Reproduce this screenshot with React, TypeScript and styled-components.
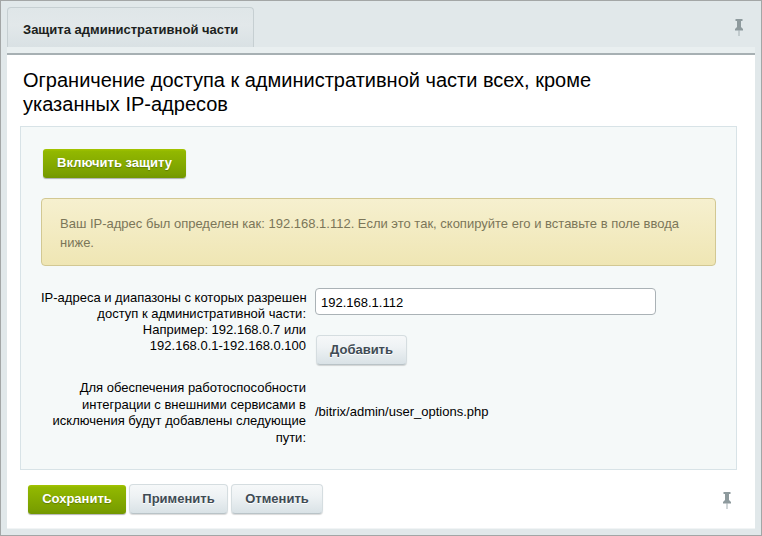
import { createGlobalStyle, styled } from 'styled-components'

const GlobalStyle = createGlobalStyle`
  html, body {
    margin: 0;
    padding: 0;
    background: #e1e8ea;
  }
  body {
    font-family: "Liberation Sans", Arial, sans-serif;
    color: #000;
  }
`

const Frame = styled.div`
  box-sizing: border-box;
  width: 762px;
  height: 536px;
  border: 1px solid #a3a6a6;
  background: #e1e8ea;
  padding: 6px;
  display: flex;
  flex-direction: column;
`

const TabBar = styled.div`
  height: 40px;
  display: flex;
  justify-content: space-between;
  align-items: flex-start;
  flex: none;
`

const Tab = styled.div`
  box-sizing: border-box;
  width: 247px;
  height: 40px;
  padding-top: 14px;
  padding-left: 15px;
  font-size: 13px;
  font-weight: bold;
  line-height: 16px;
  color: #1c1f20;
  border: 1px solid #c6cfd2;
  border-bottom: none;
  border-radius: 4px 4px 0 0;
  background: linear-gradient(#dfe6e8, #e2e8ea 45%, #d9e1e4);
`

const PinSlot = styled.div`
  padding-top: 12px;
  padding-right: 11px;
  line-height: 0;
`

const Panel = styled.div`
  flex: 1;
  background: #fff;
  box-shadow: 0 -6px 0 #e9eff0;
  display: flex;
  flex-direction: column;
  margin-top: 6px;
  border-top: 2px solid #a7b0b3;
  padding: 0 18px 0 13px;
  border-bottom: 1px solid #f1f4f5;
`

const Title = styled.h1`
  margin: 13px 0 0 3px;
  width: 640px;
  height: 58px;
  font-size: 20px;
  font-weight: normal;
  line-height: 24px;
  color: #000;
`

const Content = styled.div`
  box-sizing: border-box;
  height: 344px;
  background: #f5f9f9;
  border: 1px solid #d8e3e7;
  padding: 22px 20px 0 20px;
`

const GreenButton = styled.button<{ $width: number; $shift?: number }>`
  display: block;
  box-sizing: border-box;
  width: ${props => props.$width}px;
  height: 29px;
  margin-left: ${props => props.$shift ?? 0}px;
  padding: 0 0 2px;
  border: none;
  border-radius: 3px;
  background: linear-gradient(#a5c400 0, #92b800 8%, #7a9f00 85%, #729700);
  box-shadow: 0 1px 1px rgba(0, 0, 0, 0.3);
  color: #fff;
  font-family: inherit;
  font-size: 13px;
  font-weight: bold;
  text-shadow: 0 1px 1px rgba(0, 0, 0, 0.25);
`

const GreyButton = styled.button<{ $width: number }>`
  display: block;
  box-sizing: border-box;
  width: ${props => props.$width}px;
  height: 30px;
  padding: 0 0 1px;
  border: 1px solid #d5dde0;
  border-bottom-color: #b9c3c7;
  border-radius: 4px;
  background: linear-gradient(#f6f8f9, #eef2f4 40%, #d9e2e6);
  box-shadow: 0 1px 1px rgba(0, 0, 0, 0.15);
  color: #3f4b54;
  font-family: inherit;
  font-size: 13px;
  font-weight: bold;
  text-shadow: 0 1px 0 #fff;
`

const Notice = styled.div`
  box-sizing: border-box;
  width: 675px;
  height: 68px;
  margin-top: 20px;
  padding: 15px 18px 0 18px;
  border: 1px solid #d2c893;
  border-radius: 4px;
  background: linear-gradient(#f6f0cf, #efe6b4);
  color: #7b7659;
  font-size: 13px;
  line-height: 19px;
`

const FormGrid = styled.div`
  display: grid;
  grid-template-columns: 265px 1fr;
  column-gap: 9px;
  margin-top: 22px;
`

const Label = styled.div`
  font-size: 13px;
  line-height: 16px;
  text-align: right;
  white-space: nowrap;
  direction: ltr;
  color: #000;
  padding-top: 2px;
`

const Field = styled.div`
  display: flex;
  flex-direction: column;
  align-items: flex-start;
  gap: 20px;
`

const IpInput = styled.input`
  box-sizing: border-box;
  width: 341px;
  height: 27px;
  padding: 1px 5px 0;
  border: 1px solid #aab2b6;
  border-radius: 4px;
  background: #fff;
  font-family: inherit;
  font-size: 13px;
  color: #000;
  outline: none;
`

const AddWrap = styled.div`
  margin-left: 1px;
`

const PathsLabel = styled(Label)`
  margin-top: 13px;
  line-height: 16.5px;
`

const PathValue = styled.div`
  align-self: center;
  margin-top: 12px;
  font-size: 13px;
`

const Footer = styled.div`
  display: flex;
  align-items: center;
  gap: 3px;
  padding: 14px 5px 0 8px;
`

const FooterPin = styled.div`
  margin-left: auto;
  padding-top: 2px;
  line-height: 0;
`

function Pin() {
  return (
    <svg width="10" height="17" viewBox="0 0 10 17" fill="#8e9a9d">
      <rect x="1.5" y="0" width="7" height="2" />
      <path d="M3 2h4v6l2 2v1.5H1V10l2-2z" />
      <rect x="4.5" y="11" width="1" height="6" fill="#a4aeb1" />
    </svg>
  )
}

export default function App() {
  return (
    <Frame>
      <GlobalStyle />
      <TabBar>
        <Tab>Защита административной части</Tab>
        <PinSlot>
          <Pin />
        </PinSlot>
      </TabBar>
      <Panel>
        <Title>Ограничение доступа к административной части всех, кроме указанных IP-адресов</Title>
        <Content>
          <GreenButton $width={143} $shift={2}>Включить защиту</GreenButton>
          <Notice>
            Ваш IP-адрес был определен как: 192.168.1.112. Если это так, скопируйте его и вставьте в поле ввода ниже.
          </Notice>
          <FormGrid>
            <Label>
              IP-адреса и диапазоны с которых разрешен
              <br />
              доступ к административной части:
              <br />
              Например: 192.168.0.7 или
              <br />
              192.168.0.1-192.168.0.100
            </Label>
            <Field>
              <IpInput defaultValue="192.168.1.112" />
              <AddWrap>
                <GreyButton $width={91}>Добавить</GreyButton>
              </AddWrap>
            </Field>
            <PathsLabel>
              Для обеспечения работоспособности
              <br />
              интеграции с внешними сервисами в
              <br />
              исключения будут добавлены следующие
              <br />
              пути:
            </PathsLabel>
            <PathValue>/bitrix/admin/user_options.php</PathValue>
          </FormGrid>
        </Content>
        <Footer>
          <GreenButton $width={98}>Сохранить</GreenButton>
          <GreyButton $width={99}>Применить</GreyButton>
          <GreyButton $width={92}>Отменить</GreyButton>
          <FooterPin>
            <Pin />
          </FooterPin>
        </Footer>
      </Panel>
    </Frame>
  )
}
